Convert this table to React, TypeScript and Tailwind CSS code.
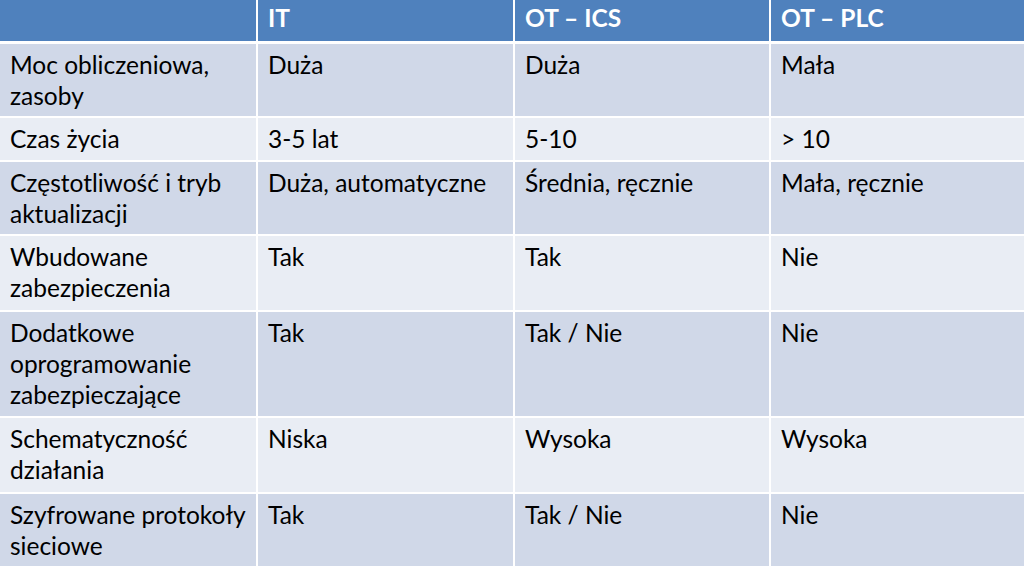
const header = ['', 'IT', 'OT – ICS', 'OT – PLC']

// each cell is a list of lines, wrapped as in the slide
const rows: { cells: string[][]; h: string; light: boolean }[] = [
  { cells: [['Moc obliczeniowa,', 'zasoby'], ['Duża'], ['Duża'], ['Mała']], h: 'h-[72px]', light: false },
  { cells: [['Czas życia'], ['3-5 lat'], ['5-10'], ['> 10']], h: 'h-[42px]', light: true },
  {
    cells: [['Częstotliwość i tryb', 'aktualizacji'], ['Duża, automatyczne'], ['Średnia, ręcznie'], ['Mała, ręcznie']],
    h: 'h-[72px]',
    light: false,
  },
  { cells: [['Wbudowane', 'zabezpieczenia'], ['Tak'], ['Tak'], ['Nie']], h: 'h-[74px]', light: true },
  {
    cells: [['Dodatkowe', 'oprogramowanie', 'zabezpieczające'], ['Tak'], ['Tak / Nie'], ['Nie']],
    h: 'h-[104px]',
    light: false,
  },
  { cells: [['Schematyczność', 'działania'], ['Niska'], ['Wysoka'], ['Wysoka']], h: 'h-[74px]', light: true },
  { cells: [['Szyfrowane protokoły', 'sieciowe'], ['Tak'], ['Tak / Nie'], ['Nie']], h: 'h-[80px]', light: false },
]

export default function App() {
  return (
    <div
      className="h-[566px] w-[1024px] overflow-hidden bg-white text-[24.5px] leading-[31px] text-black"
      style={{ fontFamily: 'Lato, "Noto Sans", sans-serif' }}
    >
      <div className="grid grid-cols-[256px_255px_254px_1fr] gap-[2px]">
        {header.map((h, i) => (
          <div key={i} className="h-[41px] bg-[#4f81bd] pl-[10px] pt-[2px] font-bold text-white">
            {h}
          </div>
        ))}
        {rows.map((r, ri) =>
          r.cells.map((lines, ci) => (
            <div
              key={`${ri}-${ci}`}
              className={`${r.h} whitespace-nowrap pl-[10px] pt-[5px] ${r.light ? 'bg-[#e9edf4]' : 'bg-[#d0d8e8]'} ${ri === 0 ? 'mt-[1px]' : ''}`}
            >
              {lines.map((l, li) => (
                <div key={li}>{l}</div>
              ))}
            </div>
          )),
        )}
      </div>
    </div>
  )
}
